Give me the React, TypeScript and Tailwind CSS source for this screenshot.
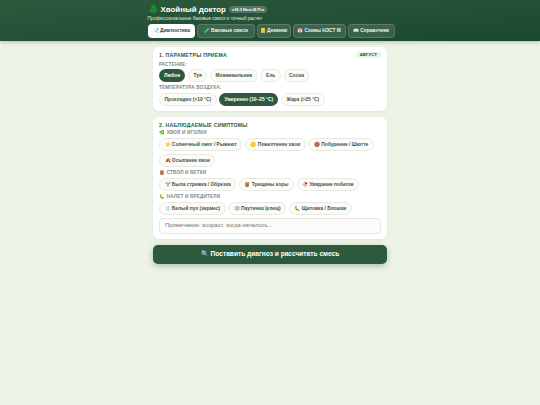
const Chip = ({ children, active }: { children: React.ReactNode; active?: boolean }) => (
  <div className={active ? "flex h-[13px] items-center rounded-full bg-[#2d5a3d] px-[5px] text-[4.9px] font-bold text-white" : "flex h-[13px] items-center rounded-full border border-[#e8eae2] bg-[#fbfbf8] px-[4.5px] text-[4.9px] font-bold text-[#46544a]"}>
    {children}
  </div>
);

const Tab = ({ children, active, w }: { children: React.ReactNode; active?: boolean; w: string }) => (
  <div className={(active ? "bg-white text-[#1e4a30]" : "border border-[#ffffff26] bg-[#ffffff1f] text-[#eef5ee]") + " flex h-[13.5px] items-center justify-center rounded-[4px] text-[4.8px] font-bold " + w}>
    {children}
  </div>
);

const Sub = ({ children }: { children: React.ReactNode }) => (
  <div className="text-[4.6px] font-bold uppercase leading-[7px] tracking-[0.2px] text-[#7c8a7e]">{children}</div>
);

export default function App() {
  return (
    <div className="min-h-[405px] bg-[#eef3e8] font-['Liberation_Sans',sans-serif]">
      <header className="h-[41px] bg-gradient-to-br from-[#2d5a3d] to-[#1a4731] pl-[147.5px] pt-[4px] shadow-[0_1px_4px_rgba(0,0,0,0.25)]">
        <div className="flex h-[11px] items-center gap-[2px]">
          <span className="text-[9px] leading-none">🌲</span>
          <span className="text-[7.9px] font-bold leading-none text-white">Хвойный доктор</span>
          <span className="ml-[1px] rounded-full bg-[#ffffff33] px-[3px] py-[0.5px] text-[4px] font-bold text-white">v19.3 Nest-M Pro</span>
        </div>
        <div className="mt-[0.5px] text-[4.7px] leading-[6px] text-[#dce8dc]">Профессиональные баковые смеси и точный расчет</div>
        <div className="mt-[2.5px] flex gap-[2px]">
          <Tab active w="w-[47.5px]">🩺 Диагностика</Tab>
          <Tab w="w-[57.5px]">🧪 Баковые смеси</Tab>
          <Tab w="w-[34px]">📒 Дневник</Tab>
          <Tab w="w-[53px]">📅 Схемы НЭСТ М</Tab>
          <Tab w="w-[47px]">📖 Справочник</Tab>
        </div>
      </header>
      <main className="mx-auto flex w-[234px] flex-col gap-[6px] pt-[6px]">
        <section className="rounded-[6px] bg-white px-[6px] pb-[5px] pt-[4px] shadow-[0_1px_3px_rgba(0,0,0,0.06)]">
          <div className="flex items-center justify-between">
            <div className="text-[5.2px] font-bold uppercase leading-[8px] tracking-[0.25px] text-[#2d5a3d]">1. Параметры приема</div>
            <div className="rounded-full bg-[#e3f3e6] px-[4px] text-[4.4px] font-bold leading-[6px] text-[#2d5a3d]">АВГУСТ</div>
          </div>
          <div className="mt-[2px]"><Sub>Растение:</Sub></div>
          <div className="mt-[1px] flex gap-[2.7px]">
            <Chip active>Любое</Chip><Chip>Туя</Chip><Chip>Можжевельник</Chip><Chip>Ель</Chip><Chip>Сосна</Chip>
          </div>
          <div className="mt-[2px]"><Sub>Температура воздуха:</Sub></div>
          <div className="mt-[2px] flex gap-[2.7px]">
            <Chip>Прохладно (&lt;10 °C)</Chip><Chip active>Умеренно (10–25 °C)</Chip><Chip>Жара (&gt;25 °C)</Chip>
          </div>
        </section>
        <section className="rounded-[6px] bg-white px-[6px] pb-[5px] pt-[4px] shadow-[0_1px_3px_rgba(0,0,0,0.06)]">
          <div className="text-[5.2px] font-bold uppercase leading-[8px] tracking-[0.25px] text-[#2d5a3d]">2. Наблюдаемые симптомы</div>
          <Sub>🌿 Хвоя и иголки</Sub>
          <div className="mt-[2px] flex flex-wrap gap-[2.7px]">
            <Chip>☀️ Солнечный ожог / Рыжеют</Chip><Chip>🟡 Пожелтение хвои</Chip><Chip>🟤 Побурение / Шютте</Chip><Chip>🍂 Осыпание хвои</Chip>
          </div>
          <div className="mt-[2px]"><Sub>🪵 Ствол и ветки</Sub></div>
          <div className="mt-[2px] flex flex-wrap gap-[2.7px]">
            <Chip>✂️ Была стрижка / Обрезка</Chip><Chip>🪵 Трещины коры</Chip><Chip>🥀 Увядание побегов</Chip>
          </div>
          <div className="mt-[2px]"><Sub>🐛 Налет и вредители</Sub></div>
          <div className="mt-[2px] flex flex-wrap gap-[2.7px]">
            <Chip>❄️ Белый пух (хермес)</Chip><Chip>🕸️ Паутинка (клещ)</Chip><Chip>🐛 Щитовка / Блошки</Chip>
          </div>
          <div className="mt-[3px] flex h-[16px] items-center rounded-[4px] border border-[#e6e8df] bg-[#fcfdfa] px-[5px] text-[5.9px] text-[#757575]">Примечание: возраст, когда началось...</div>
        </section>
        <button className="flex h-[19.5px] items-center justify-center rounded-[5px] bg-[#2d5a3d] text-[6.6px] font-bold text-white shadow-[0_2px_6px_rgba(45,90,61,0.35)]">🔍 Поставить диагноз и рассчитать смесь</button>
      </main>
    </div>
  );
}
